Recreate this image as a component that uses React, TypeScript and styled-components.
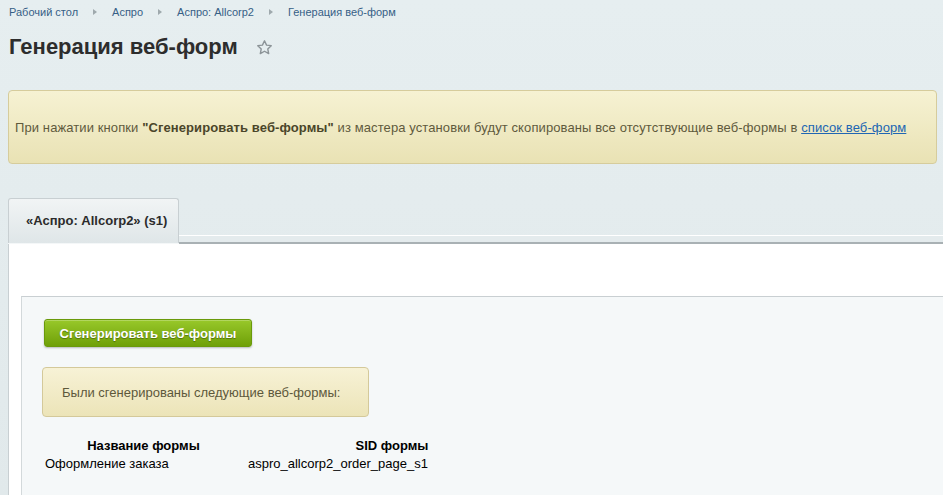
import React from "react";
import styled, { createGlobalStyle } from "styled-components";

const Global = createGlobalStyle`
  html, body { margin: 0; padding: 0; }
  body {
    background: #e3ebed;
    font-family: "Liberation Sans", Arial, sans-serif;
    overflow: hidden;
  }
`;

const Page = styled.div`
  width: 943px;
  height: 495px;
  overflow: hidden;
  padding-left: 8px;
  box-sizing: border-box;
  background: linear-gradient(#e6eef0, #e1e9eb);
`;

const Crumbs = styled.nav`
  display: flex;
  align-items: center;
  height: 24px;
  padding-left: 1px;
  font-size: 11px;
  color: #365f86;
`;

const Crumb = styled.span`
  white-space: nowrap;
`;

const Sep = styled.span`
  display: inline-block;
  width: 0;
  height: 0;
  margin: 0 15px 0 15px;
  border-top: 3px solid transparent;
  border-bottom: 3px solid transparent;
  border-left: 4px solid #9fa9ad;
`;

const TitleRow = styled.div`
  display: flex;
  align-items: center;
  gap: 18px;
  height: 46px;
  padding-left: 1px;
`;

const Title = styled.h1`
  margin: 0;
  font-size: 22px;
  font-weight: bold;
  color: #2d2d2d;
`;

const Star = styled.svg`
  width: 17px;
  height: 17px;
  margin-top: 1px;
`;

const InfoBox = styled.div`
  margin: 20px 6px 0 0;
  height: 74px;
  box-sizing: border-box;
  display: flex;
  align-items: center;
  padding: 0 0 0 6px;
  border: 1px solid #d6cc9c;
  border-radius: 4px;
  background: linear-gradient(#f6f2d3, #e9e2b4);
  font-size: 13px;
  letter-spacing: 0.1px;
  color: #5f5a3d;
  white-space: nowrap;
`;

const Strong = styled.b`
  color: #4a4529;
`;

const Link = styled.a`
  color: #2066b3;
  text-decoration: underline;
`;

const TabBar = styled.div`
  display: flex;
  margin-top: 34px;
  height: 45px;
  border-bottom: 1px solid #f4f7f8;
  position: relative;
`;

const Tab = styled.div`
  box-sizing: border-box;
  width: 171px;
  height: 45px;
  margin-bottom: -1px;
  padding-top: 14px;
  padding-left: 17px;
  border: 1px solid #c8cfd2;
  border-bottom: none;
  border-radius: 3px 3px 0 0;
  background: linear-gradient(#f1f4f5, #dfe6e8);
  font-size: 13px;
  font-weight: bold;
  color: #2b2b2b;
  z-index: 1;
`;

const TabFill = styled.div`
  flex: 1;
  align-self: flex-end;
  height: 6px;
  border-top: 1px solid #ffffff;
  border-bottom: 2px solid #a9b1b4;
  background: #e4ebed;
  margin-bottom: -1px;
`;

const Panel = styled.div`
  background: #ffffff;
  border-left: 1px solid #c8cfd2;
  padding: 52px 0 0 12px;
  height: 260px;
`;

const Inner = styled.div`
  background: #f5f8f9;
  border-top: 1px solid #c9cfd2;
  border-left: 1px solid #d3d9db;
  padding: 22px 0 0 22px;
  height: 240px;
`;

const GreenButton = styled.button`
  display: block;
  width: 208px;
  height: 28px;
  border: 1px solid #6a9a0b;
  border-radius: 3px;
  background: linear-gradient(#98c82a, #6fa008);
  box-shadow: 0 1px 2px rgba(0, 0, 0, 0.25), inset 0 1px 0 rgba(255, 255, 255, 0.25);
  color: #ffffff;
  font-family: "Liberation Sans", Arial, sans-serif;
  font-size: 13px;
  font-weight: bold;
  text-shadow: 0 1px 1px rgba(0, 0, 0, 0.35);
  padding: 0;
`;

const Notice = styled.div`
  box-sizing: border-box;
  width: 327px;
  height: 50px;
  margin: 20px 0 0 -2px;
  padding-left: 19px;
  display: flex;
  align-items: center;
  border: 1px solid #d4c99a;
  border-radius: 4px;
  background: linear-gradient(#f7f2d6, #ece4b8);
  font-size: 13px;
  color: #5d583b;
`;

const Table = styled.table`
  margin: 19px 0 0 -2px;
  border-collapse: collapse;
  font-size: 13px;
  color: #000000;
`;

const Th = styled.th<{ $w: number }>`
  width: ${(p) => p.$w}px;
  padding: 2px 3px;
  font-weight: bold;
  text-align: center;
`;

const Td = styled.td`
  padding: 1px 3px;
  text-align: left;
`;

export default function App() {
  return (
    <>
      <Global />
      <Page>
        <Crumbs>
          <Crumb>Рабочий стол</Crumb>
          <Sep />
          <Crumb>Аспро</Crumb>
          <Sep />
          <Crumb>Аспро: Allcorp2</Crumb>
          <Sep />
          <Crumb>Генерация веб-форм</Crumb>
        </Crumbs>
        <TitleRow>
          <Title>Генерация веб-форм</Title>
          <Star viewBox="0 0 24 24">
            <path
              d="M12 2.5l2.9 6.1 6.6.8-4.9 4.6 1.3 6.6L12 17.3l-5.9 3.3 1.3-6.6-4.9-4.6 6.6-.8z"
              fill="none"
              stroke="#8c9498"
              strokeWidth="2"
              strokeLinejoin="round"
            />
          </Star>
        </TitleRow>
        <InfoBox>
          <span>
            При нажатии кнопки <Strong>"Сгенерировать веб-формы"</Strong> из мастера установки будут
            скопированы все отсутствующие веб-формы в <Link href="#">список веб-форм</Link>
          </span>
        </InfoBox>
        <TabBar>
          <Tab>«Аспро: Allcorp2» (s1)</Tab>
          <TabFill />
        </TabBar>
        <Panel>
          <Inner>
            <GreenButton>Сгенерировать веб-формы</GreenButton>
            <Notice>Были сгенерированы следующие веб-формы:</Notice>
            <Table>
              <thead>
                <tr>
                  <Th $w={197}>Название формы</Th>
                  <Th $w={288}>SID формы</Th>
                </tr>
              </thead>
              <tbody>
                <tr>
                  <Td>Оформление заказа</Td>
                  <Td>aspro_allcorp2_order_page_s1</Td>
                </tr>
              </tbody>
            </Table>
          </Inner>
        </Panel>
      </Page>
    </>
  );
}
